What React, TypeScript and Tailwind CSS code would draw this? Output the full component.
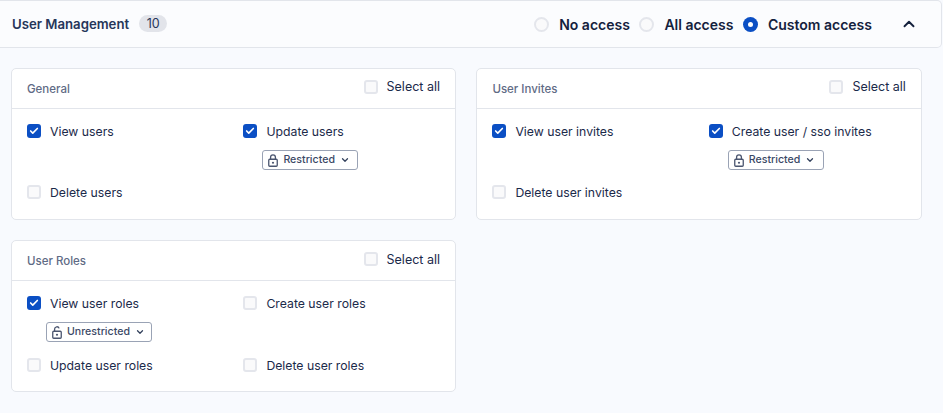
// App.tsx
// User management permissions panel

import { Check, ChevronDown, ChevronUp } from "lucide-react";

type Scope = "Restricted" | "Unrestricted";

type Perm = {
  label: string;
  checked?: boolean;
  scope?: Scope;
};

type Group = {
  title: string;
  perms: Perm[];
};

const groups: Group[] = [
  {
    title: "General",
    perms: [
      { label: "View users", checked: true },
      { label: "Update users", checked: true, scope: "Restricted" },
      { label: "Delete users" },
    ],
  },
  {
    title: "User Invites",
    perms: [
      { label: "View user invites", checked: true },
      { label: "Create user / sso invites", checked: true, scope: "Restricted" },
      { label: "Delete user invites" },
    ],
  },
  {
    title: "User Roles",
    perms: [
      { label: "View user roles", checked: true, scope: "Unrestricted" },
      { label: "Create user roles" },
      { label: "Update user roles" },
      { label: "Delete user roles" },
    ],
  },
];

function Checkbox({ checked }: { checked?: boolean }) {
  if (checked) {
    return (
      <span className="flex h-[14px] w-[14px] shrink-0 items-center justify-center rounded-[3px] bg-[#0b4fc4]">
        <Check className="h-[10px] w-[10px] text-white" strokeWidth={4} />
      </span>
    );
  }
  return (
    <span className="h-[14px] w-[14px] shrink-0 rounded-[3px] border-2 border-[#e4e6ec] bg-[#fafafb]" />
  );
}

// Lock with a keyhole dot; the shackle swings open for Unrestricted
function ScopeIcon({ scope }: { scope: Scope }) {
  return (
    <svg viewBox="0 0 10 13" className="h-[13px] w-[10px] shrink-0" fill="none">
      <rect x="0.75" y="5.25" width="8.5" height="7" rx="1" stroke="#4a556f" strokeWidth="1.3" />
      <circle cx="5" cy="8.75" r="1.1" fill="#4a556f" />
      {scope === "Restricted" ? (
        <path d="M2.6 5V3.2a2.4 2.4 0 0 1 4.8 0V5" stroke="#4a556f" strokeWidth="1.3" />
      ) : (
        <path d="M2.6 5V3a2.3 2.3 0 0 1 4.5-.6" stroke="#4a556f" strokeWidth="1.3" />
      )}
    </svg>
  );
}

function ScopeButton({ scope }: { scope: Scope }) {
  return (
    <button
      className={`ml-[-4px] mt-[12px] flex h-[20px] items-center rounded-[3px] border border-[#9aa3b5] bg-white pl-[5px] text-[10.6px] font-medium text-[#3b4966] ${
        scope === "Restricted" ? "w-[96px]" : "w-[106px]"
      }`}
    >
      <ScopeIcon scope={scope} />
      <span className="ml-[5px]">{scope}</span>
      <ChevronDown className="ml-[5px] h-[10px] w-[10px] text-[#33415c]" strokeWidth={3} />
    </button>
  );
}

function PermissionItem({ perm }: { perm: Perm }) {
  return (
    <div className="flex flex-col items-start">
      <label className="flex h-[14px] items-center gap-[9px] text-[12.25px] leading-none text-[#1b2a4a]">
        <Checkbox checked={perm.checked} />
        <span className="mt-[2px]">{perm.label}</span>
      </label>
      {perm.scope && (
        <div className="pl-[23px]">
          <ScopeButton scope={perm.scope} />
        </div>
      )}
    </div>
  );
}

function GroupCard({ group }: { group: Group }) {
  return (
    <div className="rounded-[5px] border border-[#e2e5eb] bg-white">
      <div className="flex h-[40px] items-center justify-between border-b border-[#e2e5eb] px-[15px]">
        <span className="mt-[2px] text-[11.5px] font-medium text-[#5f6b85]">{group.title}</span>
        <label className="mb-[4px] flex items-center gap-[9px] text-[12.5px] text-[#1b2a4a]">
          <Checkbox />
          <span className="mt-[2px]">Select all</span>
        </label>
      </div>
      <div className="grid grid-cols-[216.4px_1fr] gap-y-[15.4px] pb-[19.6px] pl-[15px] pt-[15px]">
        {group.perms.map((perm) => (
          <PermissionItem key={perm.label} perm={perm} />
        ))}
      </div>
    </div>
  );
}

function AccessRadio({ label, selected }: { label: string; selected?: boolean }) {
  return (
    <label className="flex items-center gap-[10px] text-[14px] font-semibold text-[#14213d]">
      {selected ? (
        <span className="flex h-[15px] w-[15px] items-center justify-center rounded-full bg-[#0b4fc4]">
          <span className="h-[5px] w-[5px] rounded-full bg-white" />
        </span>
      ) : (
        <span className="h-[15px] w-[15px] rounded-full border-2 border-[#e4e6ec] bg-[#fafafb]" />
      )}
      {label}
    </label>
  );
}

export default function App() {
  return (
    <div className="h-[413px] w-[943px] overflow-hidden bg-[#f8fafe] font-['Inter',sans-serif]">
      {/* Section header */}
      <div className="flex h-[48px] w-[942px] items-center justify-between rounded-r-[5px] border-y border-r border-[#e2e5eb] bg-[#fbfcfe] pl-[12px] pr-[23px]">
        <div className="flex items-center gap-[10px]">
          <span className="mt-[2px] text-[13.2px] font-semibold text-[#26365a]">User Management</span>
          <span className="flex h-[17px] w-[28px] items-center justify-center rounded-full bg-[#e2e4ea] text-[12.5px] font-normal text-[#26365a]">
            10
          </span>
        </div>
        <div className="flex items-center">
          <div className="flex items-center gap-[9.5px]">
            <AccessRadio label="No access" />
            <AccessRadio label="All access" />
            <AccessRadio label="Custom access" selected />
          </div>
          <ChevronUp className="ml-[28px] h-[18px] w-[18px] text-[#14213d]" strokeWidth={2.5} />
        </div>
      </div>

      {/* Permission groups */}
      <div className="grid grid-cols-[445px_445.5px] items-start gap-x-[20.4px] gap-y-[20.4px] pl-[11px] pt-[20px]">
        {groups.map((group) => (
          <GroupCard key={group.title} group={group} />
        ))}
      </div>
    </div>
  );
}
